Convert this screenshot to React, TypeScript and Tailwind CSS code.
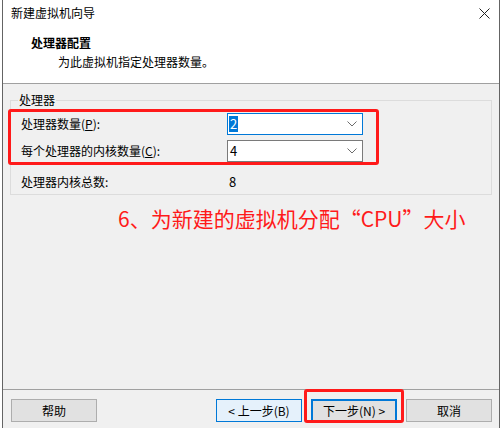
const font = "font-['Noto_Sans_CJK_SC','Noto_Sans',sans-serif]";

function Chevron() {
  return (
    <svg width="10" height="6" viewBox="0 0 10 6" className="mr-[5px]">
      <polyline points="0.5,0.5 5,5 9.5,0.5" fill="none" stroke="#6d6d6d" strokeWidth="1" />
    </svg>
  );
}

function Combo({ value, focused }: { value: string; focused?: boolean }) {
  return (
    <div
      className={`flex h-[22px] w-[136px] items-center justify-between border bg-white pl-[1px] ${
        focused ? "border-[#0078d7]" : "border-[#7a7a7a]"
      }`}
    >
      <span
        className={`text-[13px] leading-[16px] px-[1px] ${focused ? "bg-[#0078d7] text-white" : "text-black"}`}
      >
        {value}
      </span>
      <Chevron />
    </div>
  );
}

function Btn({ label, variant }: { label: string; variant?: "hover" | "focus" }) {
  const cls =
    variant === "hover"
      ? "border border-[#0078d7] bg-[#e5f1fb]"
      : variant === "focus"
      ? "border-2 border-[#0078d7] bg-[#e1e1e1]"
      : "border border-[#adadad] bg-[#e1e1e1]";
  return (
    <div className={`flex h-[23px] w-[86px] items-center justify-center text-[12px] text-black ${cls}`}>
      {label}
    </div>
  );
}

export default function App() {
  return (
    <div className={`h-[428px] w-[502px] bg-white pl-[2px] pr-[2px] ${font}`}>
      <div className="flex h-full flex-col border-x border-[#646464] bg-[#f0f0f0]">
        {/* header */}
        <div className="h-[84px] border-b border-[#a0a0a0] bg-white">
          <div className="flex items-center justify-between pl-[8px] pr-[9px] pt-[5px]">
            <span className="text-[12px] leading-[16px] text-black">新建虚拟机向导</span>
            <svg width="11" height="11" viewBox="0 0 11 11">
              <path d="M0.5 0.5 L10.5 10.5 M10.5 0.5 L0.5 10.5" stroke="#222" strokeWidth="1" />
            </svg>
          </div>
          <div className="pl-[28px] pt-[14px] text-[12px] font-bold leading-[16px] text-black">处理器配置</div>
          <div className="pl-[55px] pt-[3px] text-[12px] leading-[16px] text-black">为此虚拟机指定处理器数量。</div>
        </div>

        {/* body */}
        <div className="flex-1 px-[7px] pt-[8px]">
          <fieldset className="h-[103px] border border-[#dcdcdc] px-0 pb-0">
            <legend className="ml-[7px] px-[1px] text-[12px] leading-[16px] text-black">处理器</legend>
            <div className="-ml-[3px] mt-[1px] h-[56px] w-[371px] rounded-[3px] border-[3px] border-[#ff1a1a] pt-[1px]">
              <div className="flex h-[22px] items-center">
                <span className="w-[216px] pl-[10px] text-[12px] text-black">处理器数量(<u>P</u>):</span>
                <Combo value="2" focused />
              </div>
              <div className="mt-[5px] flex h-[22px] items-center">
                <span className="w-[216px] pl-[10px] text-[12px] text-black">每个处理器的内核数量(<u>C</u>):</span>
                <Combo value="4" />
              </div>
            </div>
            <div className="mt-[7px] flex items-center text-[12px] text-black">
              <span className="w-[218px] pl-[10px]">处理器内核总数:</span>
              <span className="text-[13px]">8</span>
            </div>
          </fieldset>
          <div className="mt-[9px] pl-[108px] text-[21px] leading-[28px] text-[#ff1a1a]">
            6、为新建的虚拟机分配“CPU”大小
          </div>
        </div>

        {/* footer */}
        <div className="flex h-[39px] items-start border-t border-[#a0a0a0] pl-[8px] pt-[9px]">
          <Btn label="帮助" />
          <div className="ml-[119px] flex gap-[9px]">
            <Btn label="< 上一步(B)" variant="hover" />
            <div className="relative">
              <Btn label="下一步(N) >" variant="focus" />
              <div className="pointer-events-none absolute -left-[7px] -right-[7px] -top-[10px] -bottom-[1px] rounded-[3px] border-[3px] border-[#ff1a1a]" />
            </div>
            <Btn label="取消" />
          </div>
        </div>
      </div>
    </div>
  );
}
